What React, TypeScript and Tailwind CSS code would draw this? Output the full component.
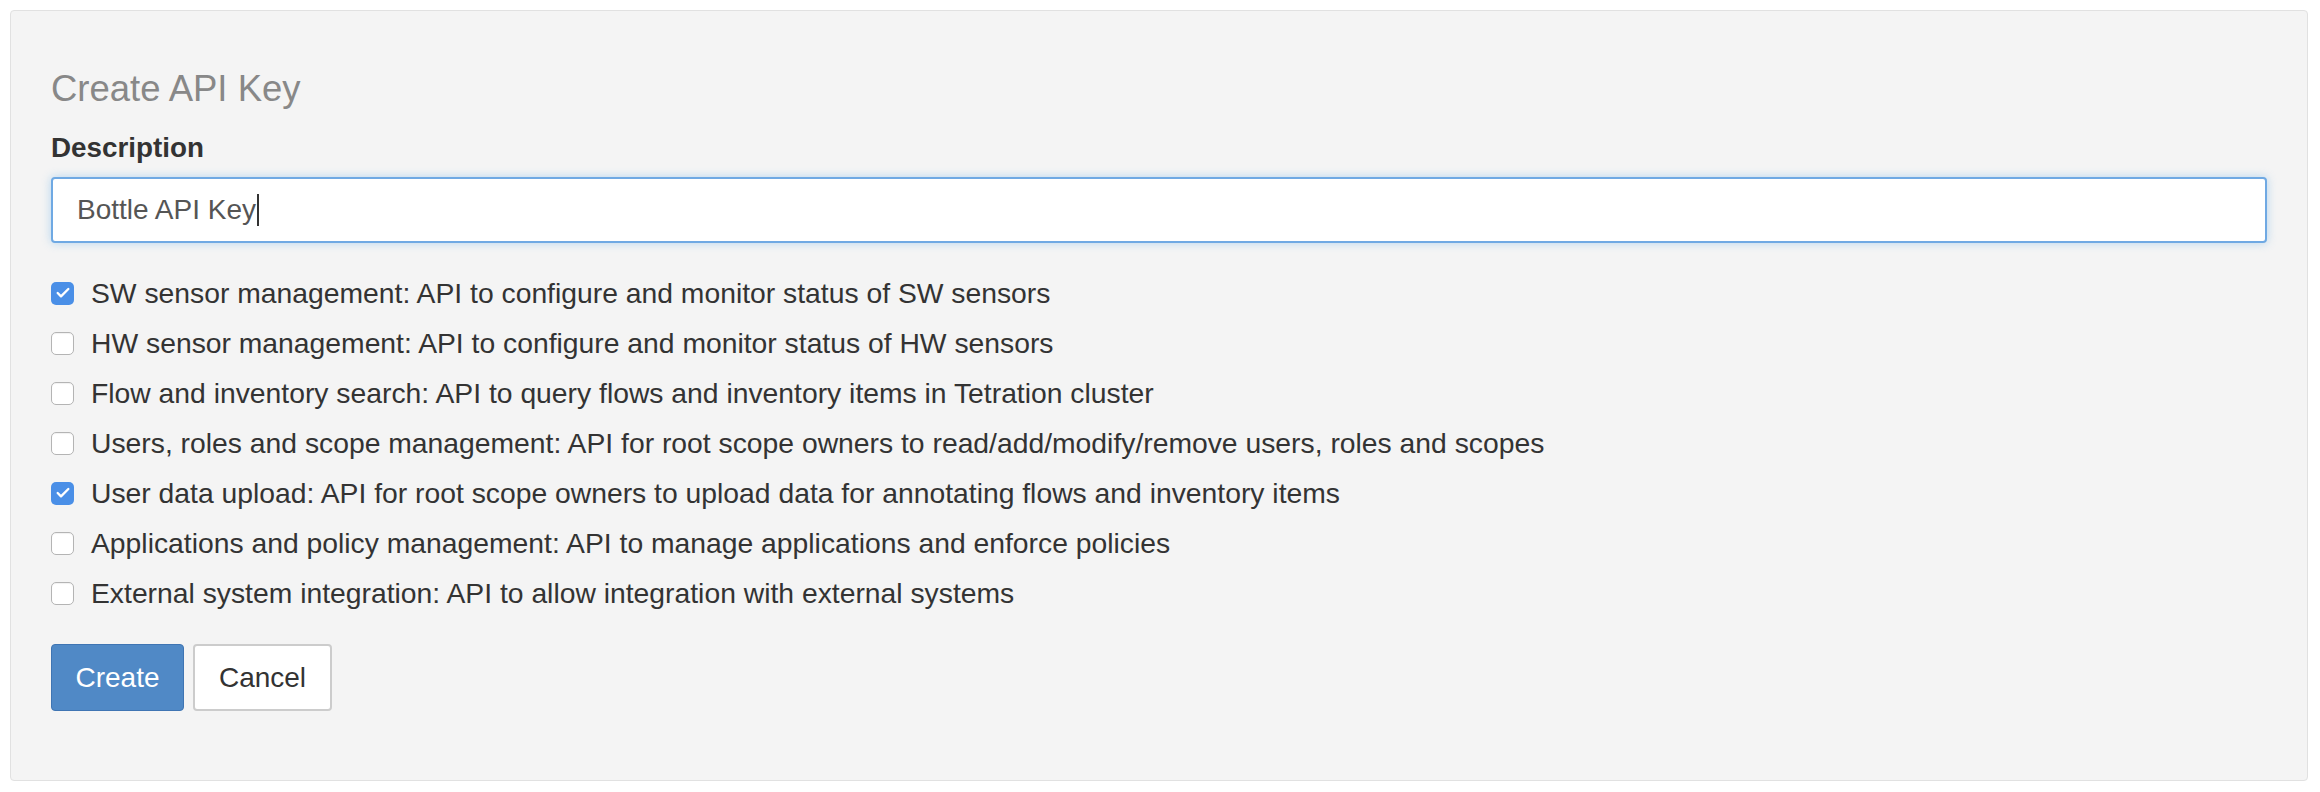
import { Check } from "lucide-react";

type Scope = {
  label: string;
  checked: boolean;
};

const scopes: Scope[] = [
  { label: "SW sensor management: API to configure and monitor status of SW sensors", checked: true },
  { label: "HW sensor management: API to configure and monitor status of HW sensors", checked: false },
  { label: "Flow and inventory search: API to query flows and inventory items in Tetration cluster", checked: false },
  {
    label: "Users, roles and scope management: API for root scope owners to read/add/modify/remove users, roles and scopes",
    checked: false,
  },
  { label: "User data upload: API for root scope owners to upload data for annotating flows and inventory items", checked: true },
  { label: "Applications and policy management: API to manage applications and enforce policies", checked: false },
  { label: "External system integration: API to allow integration with external systems", checked: false },
];

function ScopeCheckbox({ checked }: { checked: boolean }) {
  if (checked) {
    return (
      <span className="flex h-[23px] w-[23px] shrink-0 items-center justify-center rounded-[5px] bg-[#4a8fe7]">
        <Check className="h-[16px] w-[16px] text-white" strokeWidth={3.5} />
      </span>
    );
  }

  return <span className="h-[23px] w-[23px] shrink-0 rounded-[5px] border border-[#b4b4b4] bg-white shadow-[inset_0_1px_1px_rgba(0,0,0,0.06)]" />;
}

export default function App() {
  return (
    <div className="min-h-[792px] bg-white p-[10px] font-['Liberation_Sans',Arial,sans-serif] text-[#333]">
      <div className="h-[771px] w-[2298px] rounded-[4px] border border-[#e1e1e1] bg-[#f4f4f4] px-[40px] pt-[58px]">
        <h4 className="text-[36.5px] leading-[40px] text-[#888]">Create API Key</h4>

        <label className="mt-[24px] block text-[27.8px] font-bold leading-[30px] text-[#333]">Description</label>

        <div className="mt-[14px] flex h-[66px] items-center rounded-[4px] border-2 border-[#6fa9e3] bg-white pl-[24px] text-[28px] text-[#555] shadow-[0_0_10px_rgba(102,175,233,0.45)]">
          <span>Bottle API Key</span>
          <span className="ml-[1px] h-[32px] w-[2px] bg-[#333]" />
        </div>

        <div className="mt-[25px] flex flex-col">
          {scopes.map((scope) => (
            <div key={scope.label} className="flex h-[50px] items-center gap-[17px]">
              <ScopeCheckbox checked={scope.checked} />
              <span className="text-[28.3px] leading-[32px]">{scope.label}</span>
            </div>
          ))}
        </div>

        <div className="mt-[26px] flex gap-[9px]">
          <button
            type="button"
            className="h-[67px] w-[133px] rounded-[4px] border border-[#3f75b3] bg-[#5089c6] text-[28px] text-white"
          >
            Create
          </button>
          <button
            type="button"
            className="h-[67px] w-[139px] rounded-[4px] border-2 border-[#cccccc] bg-white text-[28px] text-[#333]"
          >
            Cancel
          </button>
        </div>
      </div>
    </div>
  );
}
